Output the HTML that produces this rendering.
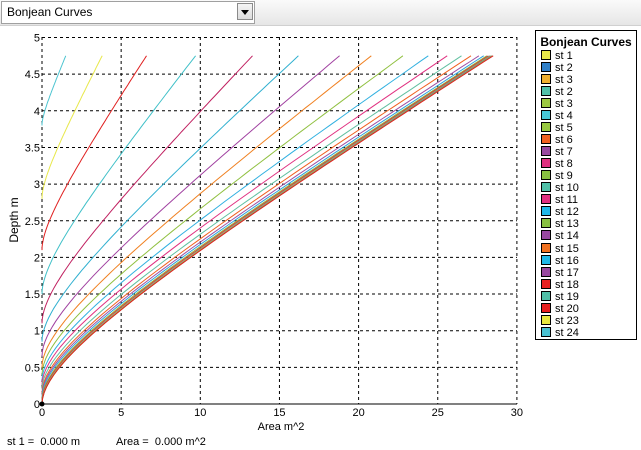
<!DOCTYPE html>
<html><head><meta charset="utf-8"><style>
body{margin:0;width:641px;height:450px;overflow:hidden;background:#fff;font-family:"Liberation Sans",Arial,sans-serif;position:relative}
#top{position:absolute;left:0;top:0;width:641px;height:25px;background:linear-gradient(#fafafa,#e6e6e6);border-bottom:1px solid #d0d0d0}
#dd{position:absolute;left:1px;top:1px;width:252px;height:21px;background:#fff;border:1px solid #a0a0a0;font-size:12px;line-height:21px;text-indent:5px}
#btn{position:absolute;right:1px;top:1px;width:16px;height:17px;background:linear-gradient(#f4f4f4,#dcdcdc);border:1px solid #8a8a8a;box-sizing:border-box}
#btn:after{content:"";position:absolute;left:3px;top:6px;border-left:4px solid transparent;border-right:4px solid transparent;border-top:5px solid #000}
#leg{position:absolute;left:535px;top:30px;width:102px;height:310px;border:1px solid #000;box-sizing:border-box;font-size:11px}
#leg h{display:block;text-align:center;font-weight:bold;font-size:12px;margin-top:4px;height:15px}
.it{height:12.04px;line-height:12px;padding-left:5px;position:relative}
.it i{display:inline-block;width:8px;height:8px;border:1px solid #000;vertical-align:-1px;margin-right:4px}
.t{position:absolute;font-size:11px}
</style></head><body>
<div id="top"><div id="dd">Bonjean Curves<div id="btn"></div></div></div>
<svg id="s" width="641" height="450" style="position:absolute;left:0;top:0" font-family="Liberation Sans,Arial,sans-serif" font-size="11"></svg>
<div id="leg"><h>Bonjean Curves</h><div id="li"></div></div>
<div class="t" style="left:7px;top:436px">st 1 =&nbsp; 0.000 m</div>
<div class="t" style="left:116px;top:436px">Area =&nbsp; 0.000 m^2</div>
<script>
var s=document.getElementById('s'),h='';
function X(a){return 42+a*15.83}function Y(d){return 404-d*73.3}
for(var i=0;i<=6;i++){var x=X(i*5);h+='<line x1="'+x+'" y1="37" x2="'+x+'" y2="404" stroke="#000" stroke-dasharray="3,3"/>';
h+='<text x="'+x+'" y="416" text-anchor="middle">'+(i*5)+'</text>';}
for(var j=0;j<=10;j++){var y=Y(j/2);h+='<line x1="42" y1="'+y+'" x2="517" y2="'+y+'" stroke="#000" stroke-dasharray="3,3"/>';
h+='<text x="40" y="'+(y+4)+'" text-anchor="end">'+(j/2)+'</text>';}
h+='<line x1="42" y1="404" x2="517" y2="404" stroke="#000"/>';
h+='<text x="281" y="430" text-anchor="middle">Area  m^2</text>';
h+='<text transform="translate(18,220) rotate(-90)" text-anchor="middle" font-size="12">Depth  m</text>';
var ends=[1.5,3.8,6.6,9.7,13.3,16.2,18.8,20.8,22.8,24.4,25.6,26.5,27.1,27.6,27.9,28.1,28.2,28.3,28.35,28.4,28.45,28.5];
var d0=[3.8,2.8,2.1,1.5,1.1,0.85,0.65,0.5,0.4,0.32,0.26,0.2,0.15,0.12,0.09,0.06,0.04,0.02,0.01,0,0,0];
var cols=['#4cc4d0','#e8e84a','#e02020','#40c0c8','#c02060','#30b0d0','#a040a0','#f08020','#90c040','#30b0e0','#e03080','#60c0a0','#f06020','#a050a0','#30a0e0','#90c040','#e03030','#40b0a0','#f0a030','#3070c0','#a0c040','#e02020'];
for(var k=0;k<ends.length;k++){var L0=4.75-d0[k],c=1.2*L0/4.75,g=function(u){return u*u/(u+c)},G=g(L0),p='';
for(var n=0;n<=60;n++){var u=L0*n/60;var a=ends[k]*g(u)/G;p+=X(a).toFixed(1)+','+Y(d0[k]+u).toFixed(1)+' ';}
h+='<polyline points="'+p+'" fill="none" stroke="'+cols[k]+'" stroke-width="1"/>';}
h+='<circle cx="42" cy="404" r="2.5" fill="#000"/>';
s.innerHTML=h;
var L=[['st 1','#e8e84a'],['st 2','#2f7fc8'],['st 3','#f0b030'],['st 2','#50c0a8'],['st 3','#9cc840'],['st 4','#48c8d8'],['st 5','#98c840'],['st 6','#f06020'],['st 7','#9848a0'],['st 8','#e03080'],['st 9','#88c040'],['st 10','#50c0a8'],['st 11','#e03080'],['st 12','#20b8e8'],['st 13','#88c040'],['st 14','#9848a0'],['st 15','#f07020'],['st 16','#20b8e8'],['st 17','#9848a0'],['st 18','#e82020'],['st 19','#50c0a8'],['st 20','#e82020'],['st 23','#e8e840'],['st 24','#48c0d0']];
var o='';L.forEach(function(e){o+='<div class="it"><i style="background:'+e[1]+'"></i>'+e[0]+'</div>'});
document.getElementById('li').innerHTML=o;
</script>
</body></html>
